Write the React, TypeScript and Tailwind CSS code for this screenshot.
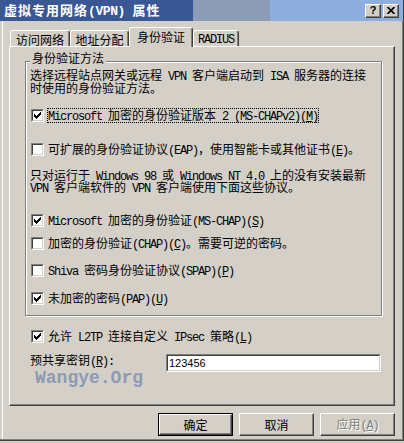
import React from "react";

function mn(s: string, kb: string) {
  const out: React.ReactNode[] = [];
  let i = 0;
  let k = 0;
  let buf = "";
  while (i < s.length) {
    if (s[i] === "&" && i + 1 < s.length) {
      if (buf) out.push(<React.Fragment key={kb + k++}>{buf}</React.Fragment>);
      buf = "";
      out.push(
        <span key={kb + k++} className="underline underline-offset-[1px]">
          {s[i + 1]}
        </span>
      );
      i += 2;
    } else {
      buf += s[i];
      i++;
    }
  }
  if (buf) out.push(<React.Fragment key={kb + k++}>{buf}</React.Fragment>);
  return out;
}

function Txt({ s, bold }: { s: string; bold?: boolean }) {
  const parts: React.ReactNode[] = [];
  const re = /([\x00-\x7f]+)|([^\x00-\x7f]+)/g;
  let m: RegExpExecArray | null;
  let k = 0;
  while ((m = re.exec(s))) {
    if (m[1]) {
      parts.push(
        <span
          key={k++}
          className={
            bold
              ? "font-['Liberation_Mono',monospace] tracking-[-0.4px]"
              : "font-['Liberation_Mono',monospace] tracking-[-1.2px]"
          }
        >
          {mn(m[1], "m" + k)}
        </span>
      );
    } else {
      parts.push(
        <span key={k++} className={bold ? "tracking-[1px]" : ""}>
          {m[2]}
        </span>
      );
    }
  }
  return <>{parts}</>;
}

function Line({ s }: { s: string }) {
  return (
    <div className="h-[12px] flex items-center whitespace-nowrap leading-[12px]">
      <span>
        <Txt s={s} />
      </span>
    </div>
  );
}

function Check() {
  const cols = [2, 3, 4, 3, 2, 1, 0];
  return (
    <svg width="7" height="7" viewBox="0 0 7 7" shapeRendering="crispEdges" className="block">
      {cols.map((y, x) => (
        <rect key={x} x={x} y={y} width="1" height="3" fill="#000" />
      ))}
    </svg>
  );
}

function Box({ checked }: { checked: boolean }) {
  return (
    <div className="w-[13px] h-[13px] shrink-0 flex border border-t-[#808080] border-l-[#808080] border-b-white border-r-white">
      <div className="flex-1 flex items-center justify-center bg-white border border-t-[#404040] border-l-[#404040] border-b-[#d4d0c8] border-r-[#d4d0c8]">
        {checked && <Check />}
      </div>
    </div>
  );
}

function CheckRow({
  label,
  checked,
  focus,
  className,
}: {
  label: string;
  checked: boolean;
  focus?: boolean;
  className?: string;
}) {
  return (
    <div className={"flex items-center h-[13px] " + (className || "")}>
      <Box checked={checked} />
      <span
        className={
          "ml-[3px] h-[15px] flex items-center whitespace-nowrap leading-[13px] border " +
          (focus ? "border-dotted border-black" : "border-transparent")
        }
      >
        <span>
          <Txt s={label} />
        </span>
      </span>
    </div>
  );
}

function Tab({ label, w, selected }: { label: string; w: string; selected?: boolean }) {
  return (
    <div
      className={
        w +
        " flex items-center justify-center whitespace-nowrap leading-[13px] border-l border-t border-white border-r border-r-[#404040] rounded-t-[3px] shadow-[inset_-1px_0_0_#808080] bg-[#d4d0c8] " +
        (selected ? "h-[20px] mb-[-1px] relative z-10 pb-[2px]" : "h-[16px] pt-[1px]")
      }
    >
      <span>
        <Txt s={label} />
      </span>
    </div>
  );
}

function Btn({ label, def, disabled }: { label: string; def?: boolean; disabled?: boolean }) {
  const inner = (
    <div className="flex-1 flex items-center justify-center border border-t-white border-l-white border-b-[#404040] border-r-[#404040] shadow-[inset_-1px_-1px_0_#808080]">
      <span
        className={
          "leading-[13px] " +
          (disabled ? "text-[#808080] [text-shadow:1px_1px_0_#fff]" : "text-black")
        }
      >
        <Txt s={label} />
      </span>
    </div>
  );
  return <div className={"w-[75px] h-[23px] flex " + (def ? "border border-black" : "")}>{inner}</div>;
}

export default function App() {
  return (
    <div className="w-[404px] h-[443px] bg-[#d4d0c8] overflow-hidden text-[12px] text-black font-['Noto_Sans_CJK_SC','Noto_Sans',sans-serif]">
      <div className="relative w-[404px] h-[441px] border-r border-b border-r-[#404040] border-b-[#404040] shadow-[inset_-1px_-1px_0_#808080,inset_2px_0_0_#d4d0c8,inset_3px_0_0_#fff]">
        {/* Title bar */}
        <div className="h-[21px] flex items-center justify-between pl-[4px] pr-[4px] bg-[linear-gradient(to_right,#3a5795_0px,#3a5795_193px,#8c9bb6_193px,#8c9bb6_270px,#8eaee0_270px)]">
          <span className="text-white font-bold text-[13px] leading-[14px] whitespace-nowrap">
            <Txt s="虚拟专用网络(VPN) 属性" bold />
          </span>
          <div className="flex gap-[2px]">
            <div className="w-[16px] h-[14px] flex items-center justify-center bg-[#d4d0c8] border border-t-white border-l-white border-b-[#404040] border-r-[#404040] shadow-[inset_-1px_-1px_0_#808080]">
              <span className="font-['Liberation_Sans',sans-serif] font-bold text-[11px] leading-[11px]">?</span>
            </div>
            <div className="w-[16px] h-[14px] flex items-center justify-center bg-[#d4d0c8] border border-t-white border-l-white border-b-[#404040] border-r-[#404040] shadow-[inset_-1px_-1px_0_#808080]">
              <svg width="8" height="7" viewBox="0 0 8 7" className="block">
                <path d="M0.5 0 L7.5 7 M7.5 0 L0.5 7" stroke="#000" strokeWidth="1.7" />
              </svg>
            </div>
          </div>
        </div>

        {/* Tabs */}
        <div className="h-[25px] flex items-end pl-[10px]">
          <Tab label="访问网络" w="w-[60px]" />
          <Tab label="地址分配" w="w-[59px]" />
          <Tab label="身份验证" w="w-[64px]" selected />
          <Tab label="RADIUS" w="w-[46px]" />
        </div>

        {/* Panel */}
        <div className="ml-[9px] w-[386px] h-[360px] border-t border-l border-white border-r border-b border-r-[#404040] border-b-[#404040] shadow-[inset_-1px_-1px_0_#808080]">
          {/* Group box */}
          <div className="relative ml-[15px] mt-[14px] w-[357px] border border-[#808080] shadow-[inset_1px_1px_0_#fff,1px_1px_0_#fff] pl-[4px] pt-[8px] pb-[10px]">
            <div className="absolute left-[4px] top-[-11px] px-[2px] h-[13px] flex items-center bg-[#d4d0c8] leading-[13px] whitespace-nowrap">
              <span>身份验证方法</span>
            </div>
            <Line s="选择远程站点网关或远程 VPN 客户端启动到 ISA 服务器的连接" />
            <Line s="时使用的身份验证方法。" />
            <CheckRow className="mt-[15px] ml-[1px]" checked focus label="Microsoft 加密的身份验证版本 2 (MS-CHAPv2)(&M)" />
            <CheckRow className="mt-[21px] ml-[1px]" checked={false} label="可扩展的身份验证协议(EAP)，使用智能卡或其他证书(&E)。" />
            <div className="mt-[14px]">
              <Line s="只对运行于 Windows 98 或 Windows NT 4.0 上的没有安装最新" />
              <Line s="VPN 客户端软件的 VPN 客户端使用下面这些协议。" />
            </div>
            <CheckRow className="mt-[20px] ml-[1px]" checked label="Microsoft 加密的身份验证(MS-CHAP)(&S)" />
            <CheckRow className="mt-[10px] ml-[1px]" checked={false} label="加密的身份验证(CHAP)(&C)。需要可逆的密码。" />
            <CheckRow className="mt-[14px] ml-[1px]" checked={false} label="Shiva 密码身份验证协议(SPAP)(&P)" />
            <CheckRow className="mt-[15px] ml-[1px]" checked label="未加密的密码(PAP)(&U)" />
          </div>

          <CheckRow className="mt-[14px] ml-[21px]" checked label="允许 L2TP 连接自定义 IPsec 策略(&L)" />

          <div className="mt-[11px] ml-[20px] flex items-start">
            <div className="w-[136px] h-[13px] flex items-center whitespace-nowrap leading-[13px]">
              <span>
                <Txt s="预共享密钥(&R):" />
              </span>
            </div>
            <div className="w-[215px] h-[18px] flex border border-t-[#808080] border-l-[#808080] border-b-white border-r-white">
              <div className="flex-1 flex items-center bg-white pl-[1px] border border-t-[#404040] border-l-[#404040] border-b-[#d4d0c8] border-r-[#d4d0c8]">
                <span className="font-['Liberation_Sans',sans-serif] text-[11px] leading-[12px]">123456</span>
              </div>
            </div>
          </div>
        </div>

        {/* Watermark */}
        <div className="absolute left-[35px] top-[369px] font-['Liberation_Mono',monospace] font-bold text-[18px] leading-[18px] text-[#8d9ab4]">
          Wangye.Org
        </div>

        {/* Buttons */}
        <div className="mt-[7px] ml-[158px] flex gap-[6px]">
          <Btn label="确定" def />
          <Btn label="取消" />
          <Btn label="应用(&A)" disabled />
        </div>
      </div>
    </div>
  );
}
